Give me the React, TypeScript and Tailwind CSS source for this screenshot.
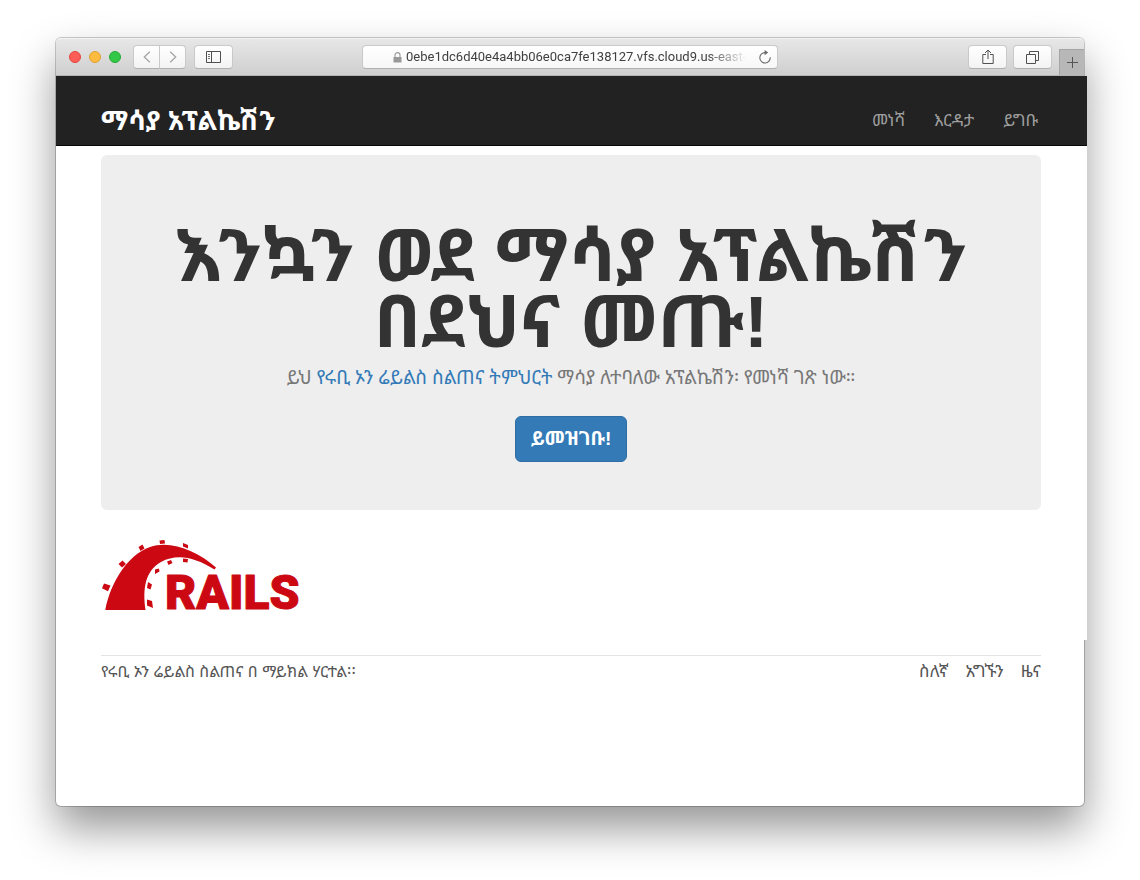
import type { ReactNode } from "react";

const navLinks = ["መነሻ", "እርዳታ", "ይግቡ"];
const footerLinks = ["ስለኛ", "አግኙን", "ዜና"];

function ToolbarButton({ label, className = "", children }: { label: string; className?: string; children: ReactNode }) {
  return (
    <button
      type="button"
      aria-label={label}
      className={`flex h-6 items-center justify-center border border-[#c9c9c9] border-b-[#b0b0b0] bg-gradient-to-b from-white to-[#f3f3f3] text-[#505050] ${className}`}
    >
      {children}
    </button>
  );
}

function Toolbar() {
  return (
    <header className="flex h-[38px] items-center rounded-t-[5px] border-t border-b border-t-[#f3f3f3] border-b-[#b4b4b4] bg-gradient-to-b from-[#e7e7e7] to-[#cfcfcf]">
      <div className="flex flex-1 items-center">
        <div className="flex gap-2 pl-[13px]">
          <button type="button" aria-label="Close" className="size-3 rounded-full border border-[#e2463f] bg-[#fc5d57]" />
          <button type="button" aria-label="Minimize" className="size-3 rounded-full border border-[#dfa035] bg-[#fdbc40]" />
          <button type="button" aria-label="Zoom" className="size-3 rounded-full border border-[#24ab34] bg-[#33c748]" />
        </div>
        <div className="ml-3 flex">
          <ToolbarButton label="Back" className="w-[27px] rounded-l">
            <svg width="8" height="12" fill="none" stroke="#a5a5a5" strokeWidth="1.3">
              <path d="M6.8 .8 1.3 6l5.5 5.2" />
            </svg>
          </ToolbarButton>
          <ToolbarButton label="Forward" className="-ml-px w-[27px] rounded-r">
            <svg width="8" height="12" fill="none" stroke="#a5a5a5" strokeWidth="1.3">
              <path d="M1.2 .8 6.7 6l-5.5 5.2" />
            </svg>
          </ToolbarButton>
        </div>
        <ToolbarButton label="Sidebar" className="ml-2 w-[39px] rounded">
          <svg width="15" height="12" fill="none" stroke="currentColor">
            <path d="M.5 .5h14v11H.5zM5.5 .5v11" />
            <path d="M2 3.5h2M2 5.5h2M2 7.5h2" strokeWidth=".8" />
          </svg>
        </ToolbarButton>
      </div>
      <div className="flex h-6 w-[416px] items-center rounded border border-[#c9c9c9] border-b-[#b0b0b0] bg-gradient-to-b from-white to-[#f7f7f7] pl-[30px] pr-1.5">
        <svg width="9" height="11" className="mr-1 shrink-0" fill="#999">
          <path d="M.5 5h8v5.5h-8z" />
          <path d="M2 5.2V3.1a2.5 2.5 0 0 1 5 0v2.1" fill="none" stroke="#999" strokeWidth="1.1" />
        </svg>
        <input
          aria-label="Address"
          readOnly
          value="0ebe1dc6d40e4a4bb06e0ca7fe138127.vfs.cloud9.us-east-2"
          className="min-w-0 flex-1 bg-transparent font-[Roboto,sans-serif] text-[13px] text-[#404040] outline-none [mask-image:linear-gradient(to_right,black_88%,transparent_100%)]"
        />
        <button type="button" aria-label="Reload" className="ml-3">
          <svg width="12" height="14" className="block" fill="none" stroke="#6b6b6b" strokeWidth="1.1">
            <path d="M11.2 7.3A5.2 5.2 0 1 1 6 2.6h2" />
            <path d="M5.6 0 9.2 2.6 5.6 5.2z" fill="#6b6b6b" stroke="none" />
          </svg>
        </button>
      </div>
      <div className="flex flex-1 items-center justify-end self-stretch">
        <ToolbarButton label="Share" className="w-[39px] rounded">
          <svg width="12" height="16" fill="none" stroke="currentColor">
            <path d="M4 5.5H.8v9h10.4v-9H8M6 10V1.2M3 4l3-3 3 3" />
          </svg>
        </ToolbarButton>
        <ToolbarButton label="Tabs" className="ml-1.5 w-[39px] rounded">
          <svg width="13" height="13" fill="none" stroke="currentColor">
            <path d="M.5 3.5h9v9h-9zM3.5 3.5v-3h9v9h-3" />
          </svg>
        </ToolbarButton>
        <button
          type="button"
          aria-label="New tab"
          className="ml-[7px] flex h-[26px] w-[25px] items-center justify-center self-end border-t border-l border-[#a5a5a5] bg-[#b7b7b7]"
        >
          <svg width="11" height="11" stroke="#555">
            <path d="M0 5.5h11M5.5 0v11" />
          </svg>
        </button>
      </div>
    </header>
  );
}

function RailsLogo() {
  return (
    <svg viewBox="0 0 204 84" className="block h-[84px] w-[204px]" fill="#cc0813" role="img" aria-label="Rails">
      <path d="M4.3 70C9 44 26 15 49 7C70 0 96 11 115 27.500L113.500 29.500C93 17 76 13.500 60 22C44 31 41.500 49 44.500 70Z" />
      <path d="M3 43.500l6.500 2-2.500 5.800-6-3zM21.500 20.500l-4 3.500 3.500 3.500 4-3.500zM41.500 4.500l-4 2.500 2 4 4-2.500zM58.500 .5l5-.5.5 3.500-5 .5zM82 3l5 2v3.500l-5-2zM82 18.500l5 .5-.5 3.500-4.500-.5zM70 20l-4 1.500 1.500 3.500 4-2zM58 28.500l-4 1v4.500l4.500-2.500zM47 42l4 2.500-1.500 5-3.500-1.500zM46 59.500l5 1.500 1 7-6-2.500z" />
      <text
        x="64"
        y="69"
        fontFamily="Roboto, sans-serif"
        fontSize="48"
        fontWeight="900"
        stroke="#cc0813"
        strokeLinejoin="round"
      >
        RAILS
      </text>
    </svg>
  );
}

export default function App() {
  return (
    <div className="min-h-screen bg-white px-14 pt-[38px] pb-[74px] font-['Liberation_Sans','Noto_Sans_Ethiopic',sans-serif]">
      <div className="min-h-[768px] rounded-[5px] bg-white shadow-[0_0_0_1px_rgba(0,0,0,0.2),0_22px_44px_rgba(0,0,0,0.42)]">
        <Toolbar />
        <div className="-mr-[3px] bg-white pb-4">
          <nav className="border-b border-[#080808] bg-[#222] pr-px">
            <div className="mx-auto flex h-[69px] max-w-[940px] items-center justify-between pt-5">
              <a href="#" className="text-[27px] leading-8 font-bold text-white">
                ማሳያ አፕልኬሽን
              </a>
              <ul className="flex gap-[29px] pr-[3px]">
                {navLinks.map((name) => (
                  <li key={name}>
                    <a href="#" className="text-[17px] text-[#9d9d9d]">
                      {name}
                    </a>
                  </li>
                ))}
              </ul>
            </div>
          </nav>
          <main className="pr-px">
            <div className="mx-auto max-w-[940px]">
              <section className="mt-[9px] rounded-md bg-[#eee] px-15 pt-[68px] pb-12 text-center">
                <h1 className="text-[73px] leading-[66px] font-bold text-[#333]">
                  እንኳን ወደ ማሳያ አፕልኬሽን በደህና መጡ!
                </h1>
                <h2 className="mt-[6px] font-[Lato,'Noto_Sans_Ethiopic',sans-serif] text-[19px] leading-8 text-[#777]">
                  ይህ{" "}
                  <a href="#" className="text-[#337ab7]">
                    የሩቢ ኦን ሬይልስ ስልጠና ትምህርት
                  </a>{" "}
                  ማሳያ ለተባለው አፕልኬሽን፡ የመነሻ ገጽ ነው።
                </h2>
                <a
                  href="#"
                  className="mt-[23px] inline-flex h-[46px] items-center rounded-md border border-[#2e6da4] bg-[#337ab7] px-[15px] text-[19px] font-bold text-white"
                >
                  ይመዝገቡ!
                </a>
              </section>
              <a href="#" className="mt-[30px] inline-block align-top">
                <RailsLogo />
              </a>
            </div>
          </main>
        </div>
        <div className="-mr-0.5 pt-[15px]">
          <footer className="mx-auto flex max-w-[940px] items-center justify-between border-t border-[#e4e4e4] pt-[3px] text-[17px] text-[#555]">
            <small className="text-base">የሩቢ ኦን ሬይልስ ስልጠና በ ማይክል ሃርተል፡፡</small>
            <ul className="flex gap-[17px]">
              {footerLinks.map((name) => (
                <li key={name}>
                  <a href="#">{name}</a>
                </li>
              ))}
            </ul>
          </footer>
        </div>
      </div>
    </div>
  );
}
